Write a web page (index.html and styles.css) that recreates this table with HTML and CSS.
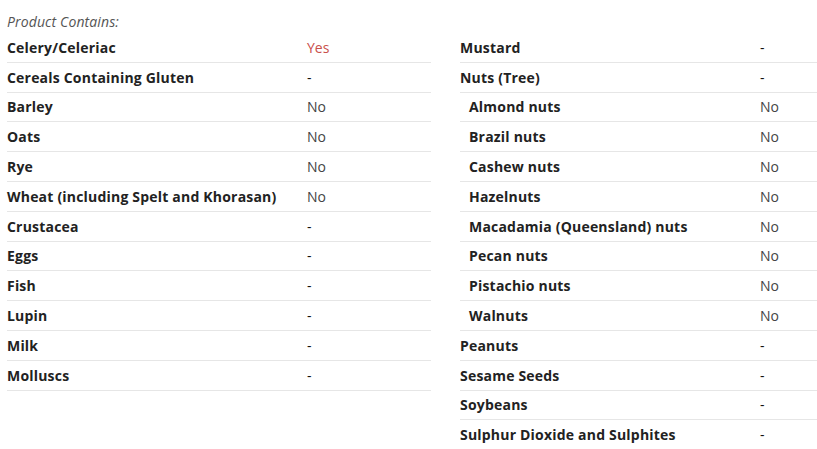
FILE: index.html
```html
<!DOCTYPE html>
<html>
<head>
<meta charset="utf-8">
<link rel="stylesheet" href="styles.css">
</head>
<body>
<div class="page">
  <div class="title">Product Contains:</div>
  <div class="cols">
    <div class="table left">
      <div class="row"><span class="name">Celery/Celeriac</span><span class="val yes">Yes</span></div>
      <div class="row"><span class="name">Cereals Containing Gluten</span><span class="val">-</span></div>
      <div class="row"><span class="name">Barley</span><span class="val no">No</span></div>
      <div class="row"><span class="name">Oats</span><span class="val no">No</span></div>
      <div class="row"><span class="name">Rye</span><span class="val no">No</span></div>
      <div class="row"><span class="name">Wheat (including Spelt and Khorasan)</span><span class="val no">No</span></div>
      <div class="row"><span class="name">Crustacea</span><span class="val">-</span></div>
      <div class="row"><span class="name">Eggs</span><span class="val">-</span></div>
      <div class="row"><span class="name">Fish</span><span class="val">-</span></div>
      <div class="row"><span class="name">Lupin</span><span class="val">-</span></div>
      <div class="row"><span class="name">Milk</span><span class="val">-</span></div>
      <div class="row"><span class="name">Molluscs</span><span class="val">-</span></div>
    </div>
    <div class="table right">
      <div class="row"><span class="name">Mustard</span><span class="val">-</span></div>
      <div class="row"><span class="name">Nuts (Tree)</span><span class="val">-</span></div>
      <div class="row sub"><span class="name">Almond nuts</span><span class="val no">No</span></div>
      <div class="row sub"><span class="name">Brazil nuts</span><span class="val no">No</span></div>
      <div class="row sub"><span class="name">Cashew nuts</span><span class="val no">No</span></div>
      <div class="row sub"><span class="name">Hazelnuts</span><span class="val no">No</span></div>
      <div class="row sub"><span class="name">Macadamia (Queensland) nuts</span><span class="val no">No</span></div>
      <div class="row sub"><span class="name">Pecan nuts</span><span class="val no">No</span></div>
      <div class="row sub"><span class="name">Pistachio nuts</span><span class="val no">No</span></div>
      <div class="row sub"><span class="name">Walnuts</span><span class="val no">No</span></div>
      <div class="row"><span class="name">Peanuts</span><span class="val">-</span></div>
      <div class="row"><span class="name">Sesame Seeds</span><span class="val">-</span></div>
      <div class="row"><span class="name">Soybeans</span><span class="val">-</span></div>
      <div class="row"><span class="name">Sulphur Dioxide and Sulphites</span><span class="val">-</span></div>
    </div>
  </div>
</div>
</body>
</html>
```
FILE: styles.css
```css
html, body {
  margin: 0;
  padding: 0;
  background: #fff;
  overflow: hidden;
}
body {
  font-family: "Open Sans", "Liberation Sans", sans-serif;
  font-size: 14px;
  color: #222;
}
.page {
  padding: 12px 0 0 7px;
}
.title {
  font-style: italic;
  color: #555;
  line-height: 20px;
  height: 21px;
  letter-spacing: 0.12px;
}
.cols {
  display: flex;
  gap: 29px;
}
.table {
  display: flex;
  flex-direction: column;
  min-width: 0;
}
.table.left {
  flex: 0 0 424px;
}
.table.right {
  flex: 1 1 auto;
}
.row {
  display: flex;
  align-items: center;
  height: 29.8px;
  box-sizing: border-box;
  border-bottom: 1px solid #e6e6e6;
  white-space: nowrap;
}
.name {
  flex: 0 0 300px;
  font-weight: 700;
  color: #222;
  letter-spacing: 0.2px;
}
.sub .name {
  padding-left: 9px;
  box-sizing: border-box;
}
.val {
  color: #111;
}
.val.no {
  color: #444;
}
.val.yes {
  color: #c9504b;
}
```
